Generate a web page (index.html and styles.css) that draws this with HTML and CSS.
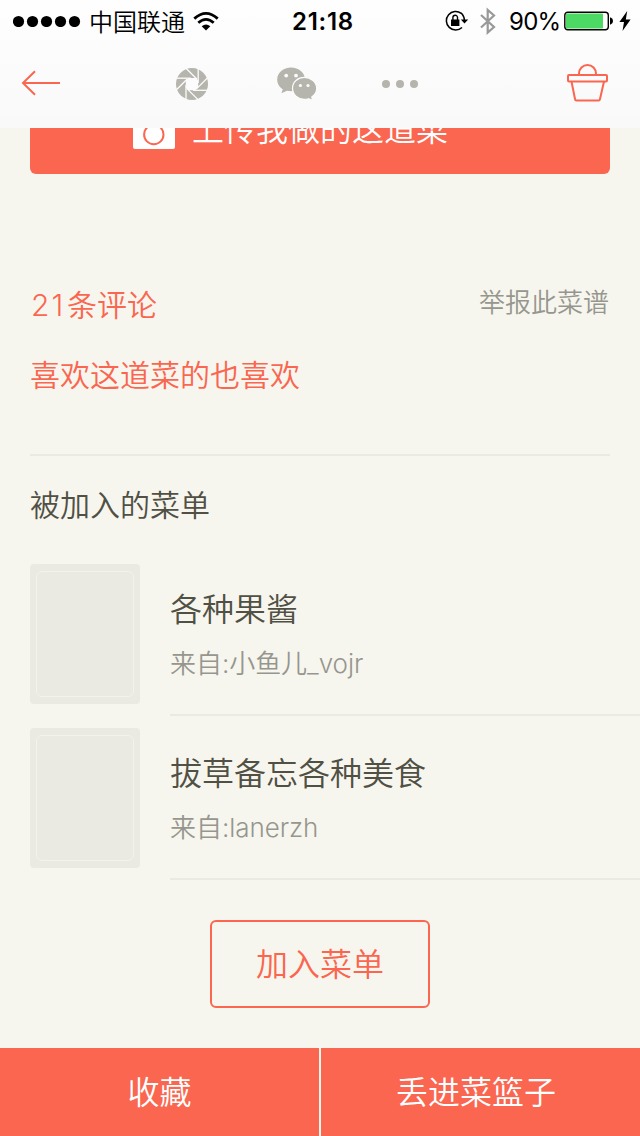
FILE: index.html
```html
<!DOCTYPE html>
<html lang="zh-CN">
<head>
<meta charset="utf-8">
<title>菜谱</title>
<link rel="stylesheet" href="styles.css">
</head>
<body>
<div class="app">
  <header class="header">
    <div class="status">
      <div class="status-left">
        <svg class="signal" width="68" height="12" viewBox="0 0 68 12"><circle cx="5.500" cy="6.500" r="5.600"/><circle cx="19.500" cy="6.500" r="5.600"/><circle cx="33.500" cy="6.500" r="5.600"/><circle cx="47.500" cy="6.500" r="5.600"/><circle cx="61.500" cy="6.500" r="5.600"/></svg>
        <span class="carrier">中国联通</span>
        <svg class="wifi" width="26" height="20" viewBox="0 0 26 20"><g fill="none" stroke="#000" stroke-width="2.8"><path d="M1.3 7.6Q13 -2.8 24.700 7.600"/><path d="M5.300 11.800Q13 5 20.700 11.800"/></g><path d="M8.700 15.200Q13 11.700 17.300 15.200L13 19.400Z"/></svg>
      </div>
      <time class="clock">21:18</time>
      <div class="status-right">
        <svg class="lock" width="24" height="22" viewBox="0 0 24 22"><path d="M16.300 3.300A9.300 9.300 0 1 0 17 17.500M15.800 2.900A9.300 9.300 0 0 1 19.300 10" fill="none" stroke="#000" stroke-width="1.500"/><path d="M15.800 9.500H23.200L19.500 13.400ZM6 9.500H14.400V16H6Z"/><path d="M7.900 10V7.500a2.300 2.300 0 0 1 4.600 0V10" fill="none" stroke="#000" stroke-width="1.400"/></svg>
        <svg class="bluetooth" width="18" height="28" viewBox="0 0 18 28"><path d="M2 8L15 20L8.700 25.500V3L15 8.500L2 20.500" fill="none" stroke="#999" stroke-width="2.200"/></svg>
        <span class="percent">90%</span>
        <svg class="battery" width="50" height="20" viewBox="0 0 50 20"><rect x=".8" y="1.200" width="43.500" height="17.600" rx="3" fill="#fff" stroke="#000" stroke-width="1.400"/><rect x="2" y="2.500" width="37" height="15" rx="1" fill="#4cd964"/><path d="M46 6.500H46.700Q49 7 49 10T46.700 13.500H46Z"/></svg>
        <svg class="bolt" width="12" height="20" viewBox="0 0 12 20"><path d="M8.200 0L.4 11H5L3.500 20L11.600 8.500H6.800Z"/></svg>
      </div>
    </div>
    <nav class="nav">
      <svg class="back" width="40" height="26" viewBox="0 0 40 26"><path d="M39 13H2M14 1.200L2 13L14 24.800" fill="none" stroke="#fa6650" stroke-width="2"/></svg>
      <svg class="moments" width="32" height="32" viewBox="0 0 32 32"><circle cx="16" cy="16" r="16" fill="#b5b5ad"/><path d="M12.500 10H19.800L22.200 12.500V19.500L19.600 22.300H12.200L9.800 19.700V12.600Z" fill="#fcfcfc"/><g stroke="#fcfcfc" stroke-width="1.300"><path d="M21 11.200L10 .2"/><path d="M22.200 15V.8"/><path d="M21 20.400L31.900 9.500"/><path d="M17 22.300H31"/><path d="M11 20.600L22 31.600"/><path d="M10 17V31.200"/><path d="M11 11.300L.2 22"/><path d="M15 10.200H1"/></g></svg>
      <svg class="wechat" width="40" height="34" viewBox="0 0 40 34"><g fill="#b5b5ad"><path d="M14 .5C6.400 .5 .2 5.800.2 12.500C.2 16.800 2.500 20.200 5.800 22.200L4.400 26.300L10 23.800Q12 24.200 14 24.200C21.600 24.200 28 19.400 28 12.500S21.600 .5 14 .5Z"/><path d="M27.300 10.300C20.800 10.300 15.500 15 15.500 21.300S20.800 32.300 27.300 32.300Q29.500 32.300 31.500 31.700L35.500 33.500L34.800 30C37.700 28 39.700 25 39.700 21.300C39.700 15 33.800 10.300 27.300 10.300Z" stroke="#fcfcfc" stroke-width="1.200"/></g><g fill="#fcfcfc"><circle cx="9.200" cy="8.600" r="1.900"/><circle cx="19" cy="8.600" r="1.900"/><circle cx="23.400" cy="18.500" r="1.600"/><circle cx="31" cy="18.500" r="1.600"/></g></svg>
      <svg class="more" width="36" height="8" viewBox="0 0 36 8" fill="#b5b5ad"><circle cx="4" cy="4" r="4"/><circle cx="18" cy="4" r="4"/><circle cx="32" cy="4" r="4"/></svg>
      <svg class="basket" width="42" height="38" viewBox="0 0 42 38" fill="none" stroke="#fa6650" stroke-width="2"><path d="M12 11V9.500a8.500 8.500 0 0 1 17 0V11"/><rect x="1" y="11" width="39" height="6.400" rx="1"/><path d="M4.500 17.500L8 35Q8.200 36.500 9.500 36.500H31.500Q32.800 36.500 33 35L37 17.500"/></svg>
    </nav>
  </header>
  <main class="content">
    <div class="upload">
      <svg width="42" height="34" viewBox="0 0 42 34"><path d="M12 4L15 0H27L30 4H39Q42 4 42 7V32Q42 34 40 34H2Q0 34 0 32V7Q0 4 3 4Z" fill="#fff"/><circle cx="20.800" cy="19.500" r="9.700" fill="none" stroke="#fa6650" stroke-width="2"/></svg>
      <span>上传我做的这道菜</span>
    </div>
    <div class="links">
      <a class="comments"><span class="count">21</span>条评论</a>
      <a class="report">举报此菜谱</a>
    </div>
    <a class="also-like">喜欢这道菜的也喜欢</a>
    <section class="menus">
      <h2 class="menus-title">被加入的菜单</h2>
      <article class="menu">
        <div class="cover"><div class="cover-frame"></div></div>
        <div class="menu-info">
          <h3 class="menu-name">各种果酱</h3>
          <p class="menu-from">来自:小鱼儿_vojr</p>
        </div>
      </article>
      <article class="menu">
        <div class="cover"><div class="cover-frame"></div></div>
        <div class="menu-info">
          <h3 class="menu-name">拔草备忘各种美食</h3>
          <p class="menu-from">来自:lanerzh</p>
        </div>
      </article>
    </section>
    <a class="add">加入菜单</a>
  </main>
  <footer class="actions">
    <a class="action">收藏</a>
    <a class="action action-basket">丢进菜篮子</a>
  </footer>
</div>
</body>
</html>
```
FILE: styles.css
```css
* { box-sizing: border-box; margin: 0; padding: 0; }
body {
  background: #f7f6ee;
  color: #505045;
  font-family: Inter, "Noto Sans CJK SC", sans-serif;
  font-weight: 350;
}
svg { display: block; flex: none; }
.app { display: flex; flex-direction: column; width: 640px; height: 1136px; overflow: hidden; }
.header { flex: none; height: 128px; background: linear-gradient(#fefefe, #f9f9f9); }
.status { display: grid; grid-template-columns: 280px 86px 1fr; align-items: center; height: 40px; color: #000; }
.status-left, .status-right { display: flex; align-items: center; height: 40px; }
.signal { margin-left: 13px; }
.carrier { padding-top: 3px; margin-left: 8px; font-size: 24px; line-height: 40px; font-weight: 350; }
.wifi { margin-left: 8px; }
.clock { padding-top: 2px; text-align: center; font-size: 24px; line-height: 40px; font-weight: 600; letter-spacing: .7px; }
.lock { margin-left: 79px; }
.bluetooth { margin-left: 10px; }
.percent { width: 50px; padding-top: 2px; margin-left: 12px; font-size: 24px; line-height: 40px; font-weight: 400; letter-spacing: -.7px; white-space: nowrap; }
.battery { margin-left: 5px; }
.bolt { margin-left: 5px; }
.nav { display: flex; align-items: center; height: 88px; padding: 0 31px 0 21px; }
.back { margin-bottom: 2px; }
.moments { margin-left: 115px; }
.wechat { margin-left: 69px; }
.more { margin-left: 65px; }
.basket { margin: 0 0 2px auto; }
.content { flex: 1; min-height: 0; display: flex; flex-direction: column; overflow: hidden; }
.upload {
  flex: none; display: flex; align-items: center; gap: 17px;
  height: 88px; margin: -42px 30px 0; padding-left: 103px;
  background: #fa6650; border-radius: 6px; color: #fff; font-size: 32px; line-height: 48px;
}
.upload svg { margin-top: 4px; }
.links { display: flex; justify-content: space-between; height: 70px; margin: 96px 31px 0 30px; }
.comments, .also-like { color: #fa6650; font-size: 30px; line-height: 70px; }
.count { display: inline-block; width: 37px; padding-left: 1px; letter-spacing: 2px; }
.report { color: #96968f; font-size: 26px; line-height: 66px; }
.also-like { height: 114px; padding-left: 30px; }
.menus-title { height: 110px; margin: 0 30px; border-top: 2px solid #eaeae2; font-size: 30px; line-height: 98px; font-weight: 350; }
.menu { display: flex; gap: 30px; height: 164px; padding-left: 30px; }
.cover { width: 110px; height: 140px; padding: 7px 6px; border-radius: 4px; background: #eaeae2; }
.cover-frame { height: 126px; border: 1px solid #f3f3ec; border-radius: 6px; }
.menu-info { flex: 1; height: 152px; padding-top: 22px; border-bottom: 2px solid #eaeae2; }
.menu-name { font-size: 32px; line-height: 48px; font-weight: 350; }
.menu-from { padding-top: 10px; font-size: 26px; line-height: 40px; color: #96968f; letter-spacing: -.05px; }
.add {
  flex: none; align-self: center; width: 220px; height: 88px; margin-top: 28px;
  border: 2px solid #fa6650; border-radius: 6px; color: #fa6650;
  font-size: 32px; line-height: 86px; text-align: center;
}
.actions { flex: none; display: grid; grid-template-columns: 319px 319px; gap: 2px; height: 88px; }
.action { background: #fa6650; color: #fff; font-size: 32px; line-height: 90px; text-align: center; }
.action-basket { padding-right: 9px; }
```
